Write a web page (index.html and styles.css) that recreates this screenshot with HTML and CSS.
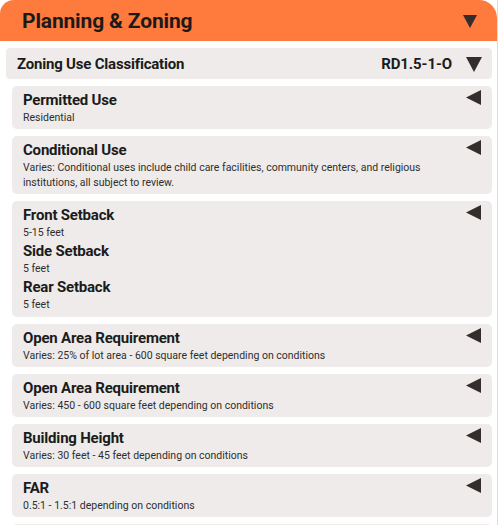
FILE: index.html
```html
<!DOCTYPE html>
<html>
<head>
<meta charset="utf-8">
<link rel="stylesheet" href="styles.css">
</head>
<body>
<div class="panel">
  <div class="panel-header">
    <h1 class="panel-title">Planning &amp; Zoning</h1>
    <svg class="tri-down-lg" viewBox="0 0 14 13"><polygon points="0,0 14,0 7,13"/></svg>
  </div>
  <div class="zoning-row">
    <span class="zoning-label">Zoning Use Classification</span>
    <span class="zoning-code">RD1.5-1-O</span>
    <svg class="tri-down" viewBox="0 0 16 15"><polygon points="0,0 16,0 8,15"/></svg>
  </div>
  <div class="cards">
    <div class="card">
      <div class="card-body">
        <div class="item"><div class="item-title">Permitted Use</div><div class="item-value">Residential</div></div>
      </div>
      <svg class="tri-left" viewBox="0 0 15 15"><polygon points="15,0 15,15 0,7.5"/></svg>
    </div>
    <div class="card">
      <div class="card-body">
        <div class="item"><div class="item-title">Conditional Use</div><div class="item-value">Varies: Conditional uses include child care facilities, community centers, and religious institutions, all subject to review.</div></div>
      </div>
      <svg class="tri-left" viewBox="0 0 15 15"><polygon points="15,0 15,15 0,7.5"/></svg>
    </div>
    <div class="card">
      <div class="card-body group">
        <div class="item"><div class="item-title">Front Setback</div><div class="item-value">5-15 feet</div></div>
        <div class="item"><div class="item-title">Side Setback</div><div class="item-value">5 feet</div></div>
        <div class="item"><div class="item-title">Rear Setback</div><div class="item-value">5 feet</div></div>
      </div>
      <svg class="tri-left" viewBox="0 0 15 15"><polygon points="15,0 15,15 0,7.5"/></svg>
    </div>
    <div class="card">
      <div class="card-body">
        <div class="item"><div class="item-title">Open Area Requirement</div><div class="item-value">Varies: 25% of lot area - 600 square feet depending on conditions</div></div>
      </div>
      <svg class="tri-left" viewBox="0 0 15 15"><polygon points="15,0 15,15 0,7.5"/></svg>
    </div>
    <div class="card">
      <div class="card-body">
        <div class="item"><div class="item-title">Open Area Requirement</div><div class="item-value">Varies: 450 - 600 square feet depending on conditions</div></div>
      </div>
      <svg class="tri-left" viewBox="0 0 15 15"><polygon points="15,0 15,15 0,7.5"/></svg>
    </div>
    <div class="card">
      <div class="card-body">
        <div class="item"><div class="item-title">Building Height</div><div class="item-value">Varies: 30 feet - 45 feet depending on conditions</div></div>
      </div>
      <svg class="tri-left" viewBox="0 0 15 15"><polygon points="15,0 15,15 0,7.5"/></svg>
    </div>
    <div class="card">
      <div class="card-body">
        <div class="item"><div class="item-title">FAR</div><div class="item-value">0.5:1 - 1.5:1 depending on conditions</div></div>
      </div>
      <svg class="tri-left" viewBox="0 0 15 15"><polygon points="15,0 15,15 0,7.5"/></svg>
    </div>
    <div class="card card-stub"></div>
  </div>
</div>
</body>
</html>
```
FILE: styles.css
```css
* { box-sizing: border-box; }
html, body { margin: 0; padding: 0; background: #ffffff; }
body {
  font-family: Roboto, "Liberation Sans", sans-serif;
  color: #1b1b1b;
  overflow: hidden;
  height: 525px;
}
.panel {
  width: 498px;
  border-right: 1px solid #dcdcdc;
  height: 525px;
  overflow: hidden;
}
.panel-header {
  height: 41px;
  background: #ff7a3d;
  border-radius: 14px 18px 0 0;
  display: flex;
  align-items: center;
  justify-content: space-between;
  padding: 0 20px 0 22px;
}
.panel-title {
  margin: 0;
  font-size: 21px;
  font-weight: 700;
  color: #1c1a19;
  letter-spacing: -0.15px;
}
.tri-down-lg { width: 14px; height: 13px; fill: #332d2c; margin-top: 1px; }
.zoning-row {
  margin: 7px 5px 0 6px;
  height: 31px;
  background: #eeebea;
  border-radius: 4px;
  display: flex;
  align-items: center;
  padding: 0 10px 0 11px;
}
.zoning-label { font-size: 15px; font-weight: 700; flex: 1; letter-spacing: -0.2px; }
.zoning-code { font-size: 15px; font-weight: 700; margin-right: 14px; letter-spacing: -0.1px; }
.tri-down { width: 16px; height: 15px; fill: #332d2c; margin-top: 1px; }
.cards {
  display: flex;
  flex-direction: column;
  gap: 7px;
  padding: 7px 5px 0 12px;
}
.card {
  background: #eeebea;
  border-radius: 5px;
  display: flex;
  align-items: flex-start;
  padding: 4px 11px 4px 11px;
}
.card-stub { height: 20px; flex: none; }
.card-body { flex: 1; }
.item-title {
  font-size: 15px;
  font-weight: 700;
  line-height: 20px;
  letter-spacing: -0.2px;
}
.item-value {
  font-size: 10.5px;
  line-height: 15px;
  color: #2e2e2e;
  padding-right: 10px;
}
.group .item-value { line-height: 16px; }
.tri-left { width: 15px; height: 15px; fill: #332d2c; margin-top: 0; flex: none; }
```
